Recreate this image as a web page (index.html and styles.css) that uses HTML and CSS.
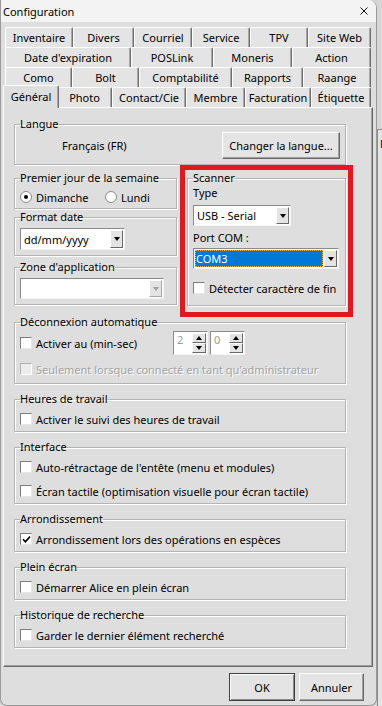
FILE: index.html
```html
<!DOCTYPE html>
<html lang="fr">
<head>
  <meta charset="UTF-8">
  <title>Configuration</title>
  <link rel="stylesheet" href="styles.css">
</head>
<body>
  <div class="screen">
    <div class="window">
      <div class="titlebar">
        <span class="title">Configuration</span>
        <svg class="close" width="8" height="8" viewBox="0 0 8 8"><path d="M0.5 0.5L7.5 7.5M7.5 0.5L0.5 7.5" stroke="#111" stroke-width="1"/></svg>
      </div>

      <div class="tabs">
        <div class="tabrow row1">
          <span class="tab">Inventaire</span>
          <span class="tab">Divers</span>
          <span class="tab">Courriel</span>
          <span class="tab">Service</span>
          <span class="tab">TPV</span>
          <span class="tab">Site Web</span>
        </div>
        <div class="tabrow row2">
          <span class="tab">Date d'expiration</span>
          <span class="tab">POSLink</span>
          <span class="tab">Moneris</span>
          <span class="tab">Action</span>
        </div>
        <div class="tabrow row3">
          <span class="tab">Como</span>
          <span class="tab">Bolt</span>
          <span class="tab">Comptabilité</span>
          <span class="tab">Rapports</span>
          <span class="tab">Raange</span>
        </div>
        <div class="tabrow row4">
          <span class="tab active">Général</span>
          <span class="tab">Photo</span>
          <span class="tab">Contact/Cie</span>
          <span class="tab">Membre</span>
          <span class="tab">Facturation</span>
          <span class="tab">Étiquette</span>
        </div>
      </div>

      <div class="panel">
        <fieldset class="grp langue">
          <legend>Langue</legend>
          <div class="langue-row">
            <span class="lang-name">Français (FR)</span>
            <button class="btn btn-lang">Changer la langue...</button>
          </div>
        </fieldset>

        <div class="mid">
          <div class="leftcol">
            <fieldset class="grp">
              <legend>Premier jour de la semaine</legend>
              <div class="radios">
                <span class="opt"><span class="radio on"></span>Dimanche</span>
                <span class="opt"><span class="radio"></span>Lundi</span>
              </div>
            </fieldset>
            <fieldset class="grp combo-grp">
              <legend>Format date</legend>
              <div class="combo combo-date">
                <span class="combo-val">dd/mm/yyyy</span>
                <span class="drop"><span class="tri"></span></span>
              </div>
            </fieldset>
            <fieldset class="grp combo-grp zone">
              <legend>Zone d'application</legend>
              <div class="combo combo-zone">
                <span class="combo-val"></span>
                <span class="drop off"><span class="tri"></span></span>
              </div>
            </fieldset>
          </div>

          <div class="highlight">
            <fieldset class="grp scanner">
              <legend>Scanner</legend>
              <div class="field-label">Type</div>
              <div class="combo combo-type">
                <span class="combo-val">USB - Serial</span>
                <span class="drop"><span class="tri"></span></span>
              </div>
              <div class="field-label port">Port COM :</div>
              <div class="combo combo-port">
                <span class="combo-val"><span class="picked">COM3</span></span>
                <span class="drop"><span class="tri"></span></span>
              </div>
              <div class="chk scan-chk"><span class="box"></span>Détecter caractère de fin</div>
            </fieldset>
          </div>
        </div>

        <fieldset class="grp deco">
          <legend>Déconnexion automatique</legend>
          <div class="deco-row">
            <div class="chk"><span class="box"></span>Activer au (min-sec)</div>
            <div class="spinners">
              <div class="spin">
                <span class="spin-val">2</span>
                <span class="spin-btns"><span class="sb"><span class="up"></span></span><span class="sb"><span class="down"></span></span></span>
              </div>
              <div class="spin">
                <span class="spin-val">0</span>
                <span class="spin-btns"><span class="sb"><span class="up"></span></span><span class="sb"><span class="down"></span></span></span>
              </div>
            </div>
          </div>
          <div class="chk disabled"><span class="box"></span>Seulement lorsque connecté en tant qu'administrateur</div>
        </fieldset>

        <fieldset class="grp">
          <legend>Heures de travail</legend>
          <div class="chk"><span class="box"></span>Activer le suivi des heures de travail</div>
        </fieldset>

        <fieldset class="grp">
          <legend>Interface</legend>
          <div class="chk"><span class="box"></span>Auto-rétractage de l'entête (menu et modules)</div>
          <div class="chk"><span class="box"></span>Écran tactile (optimisation visuelle pour écran tactile)</div>
        </fieldset>

        <fieldset class="grp">
          <legend>Arrondissement</legend>
          <div class="chk"><span class="box checked"><svg width="9" height="9" viewBox="0 0 9 9"><path d="M1 4.2L3.4 6.8L8 1.6" fill="none" stroke="#000" stroke-width="1.6"/></svg></span>Arrondissement lors des opérations en espèces</div>
        </fieldset>

        <fieldset class="grp">
          <legend>Plein écran</legend>
          <div class="chk"><span class="box"></span>Démarrer Alice en plein écran</div>
        </fieldset>

        <fieldset class="grp">
          <legend>Historique de recherche</legend>
          <div class="chk"><span class="box"></span>Garder le dernier élément recherché</div>
        </fieldset>
      </div>

      <div class="footer">
        <button class="btn btn-ok">OK</button>
        <button class="btn btn-cancel">Annuler</button>
      </div>
    </div>
    <div class="behind">
      <div class="behind-top"></div>
      <div class="behind-body">F</div>
    </div>
  </div>
</body>
</html>
```

FILE: styles.css
```css
* {
  margin: 0;
  padding: 0;
  box-sizing: border-box;
}
body {
  width: 382px;
  height: 706px;
  overflow: hidden;
  background: #d6d6d6;
  font-family: "Noto Sans", "Open Sans", sans-serif;
  font-size: 11px;
  color: #000;
}
.screen {
  display: flex;
  height: 706px;
}
.window {
  flex: none;
  width: 377px;
  height: 706px;
  display: flex;
  flex-direction: column;
  background: #dedede;
  border: 1px solid #9a9a9a;
  border-top: 0;
  border-radius: 0 8px 7px 7px;
  overflow: hidden;
}

/* title */
.titlebar {
  height: 22px;
  display: flex;
  align-items: center;
  justify-content: space-between;
  padding: 0 8px 0 2px;
  background: #f3f3f3;
}
.title {
  font-size: 11px;
}

/* tabs */
.tabs {
  padding: 5px 0 0 4px;
}
.tabrow {
  display: grid;
  width: 366px;
  height: 20px;
}
.row1 { grid-template-columns: 68px 61px 58px 58px 58px 63px; }
.row2 { grid-template-columns: 126px 82px 79px 79px; }
.row3 { grid-template-columns: 67px 67px 93px 71px 68px; }
.row4 { grid-template-columns: 52px 55px 74px 59px 66px 60px; }
.tab {
  display: flex;
  align-items: center;
  justify-content: center;
  background: #e4e4e4;
  border-top: 1px solid #fff;
  border-left: 1px solid #fff;
  border-right: 1px solid #6f6f6f;
  box-shadow: inset -1px 0 #a8a8a8;
  border-radius: 2px 2px 0 0;
  white-space: nowrap;
}
.tab.active {
  position: relative;
  z-index: 2;
  margin: -2px -2px -1px;
  background: #dedede;
  padding-bottom: 2px;
}

/* panel */
.panel {
  height: 560px;
  margin: 0 3px 0 2px;
  padding: 8px 26px 0 10px;
  border: 1px solid;
  border-color: #fff #696969 #696969 #fff;
  box-shadow: inset -1px -1px #a0a0a0;
  display: flex;
  flex-direction: column;
  gap: 7px;
}
.grp {
  min-width: 0;
  padding: 0 5px;
  border: 1px solid #b4b4b4;
  box-shadow: inset 1px 1px #fff, 1px 1px #fff;
}
.grp legend {
  padding: 0;
  line-height: 16px;
}
.panel > .langue {
  padding-bottom: 5px;
}
.langue-row {
  display: flex;
  align-items: center;
  height: 27px;
}
.lang-name {
  margin-left: 42px;
}
.btn {
  font: inherit;
  color: #000;
  background: #e4e4e4;
  border: 1px solid;
  border-color: #fff #696969 #696969 #fff;
  box-shadow: inset -1px -1px #a0a0a0;
}
.btn-lang {
  margin-left: auto;
  width: 118px;
  height: 27px;
}

/* middle block */
.mid {
  display: flex;
  align-items: flex-start;
  margin-top: -7px;
}
.leftcol {
  width: 164px;
  padding-top: 5px;
  display: flex;
  flex-direction: column;
}
.leftcol .grp {
  margin-right: 1px;
}
.radios {
  display: grid;
  grid-template-columns: 85px auto;
  height: 22px;
  align-items: center;
}
.opt {
  display: flex;
  align-items: center;
}
.radio {
  width: 12px;
  height: 12px;
  margin-right: 4px;
  border-radius: 50%;
  background: #fff;
  border: 1px solid #8a8a8a;
  display: flex;
  align-items: center;
  justify-content: center;
}
.radio.on::after {
  content: "";
  width: 4px;
  height: 4px;
  border-radius: 50%;
  background: #000;
}
.combo-grp {
  padding-bottom: 5px;
}
.zone {
  margin-top: 3px;
}
.combo {
  display: flex;
  align-items: center;
  height: 22px;
  margin-top: 3px;
  padding: 1px;
  background: #fff;
  border: 1px solid;
  border-color: #8a8a8a #f4f4f4 #f4f4f4 #8a8a8a;
}
.combo-val {
  flex: 1;
  padding-left: 2px;
  white-space: nowrap;
}
.drop {
  width: 13px;
  height: 100%;
  display: flex;
  align-items: center;
  justify-content: center;
  background: #e4e4e4;
  border: 1px solid;
  border-color: #fff #696969 #696969 #fff;
}
.tri {
  width: 0;
  height: 0;
  border-left: 3.5px solid transparent;
  border-right: 3.5px solid transparent;
  border-top: 4px solid #000;
}
.drop.off .tri {
  border-top-color: #a0a0a0;
}
.drop.off {
  border-color: #fff #a8a8a8 #a8a8a8 #fff;
}
.combo-date {
  width: 105px;
}
.combo-zone {
  width: 144px;
  height: 21px;
}

/* highlighted scanner */
.highlight {
  width: 173px;
  margin-left: 2px;
  margin-right: -7px;
  margin-bottom: -10px;
  border: 5px solid #e3171d;
  padding: 0 2px 6px;
}
.scanner {
  padding-bottom: 5px;
}
.field-label {
  line-height: 14px;
}
.field-label.port {
  margin-top: 4px;
  line-height: 16px;
}
.combo-type {
  width: 98px;
  height: 21px;
  margin-top: 5px;
}
.combo-port {
  width: 146px;
  height: 21px;
  margin-top: 2px;
}
.combo-port .combo-val {
  padding-left: 0;
  height: 100%;
  display: flex;
}
.picked {
  flex: 1;
  display: flex;
  align-items: center;
  padding-left: 1px;
  color: #fff;
  background: #0078d7;
  outline: 1px dotted #f0b040;
  outline-offset: -1px;
  margin-right: 1px;
}
.scan-chk {
  margin-top: 7px;
  height: 22px;
}

/* checkboxes */
.chk {
  display: flex;
  align-items: center;
  height: 24px;
  white-space: nowrap;
}
.box {
  flex: none;
  width: 12px;
  height: 12px;
  margin-right: 4px;
  background: #fff;
  border: 1px solid;
  border-color: #7c7c7c #e6e6e6 #e6e6e6 #7c7c7c;
  display: flex;
  align-items: center;
  justify-content: center;
}
.chk.disabled {
  color: #a3a3a3;
  text-shadow: 1px 1px #fff;
  height: 26px;
}
.chk.disabled .box {
  background: #ececec;
  border-color: #b0b0b0 #fff #fff #b0b0b0;
}

/* déconnexion */
.deco {
  padding-bottom: 1px;
}
.deco-row {
  display: grid;
  grid-template-columns: 153px auto;
  align-items: center;
  height: 26px;
}
.spinners {
  display: flex;
  gap: 2px;
}
.spin {
  display: flex;
  width: 35px;
  height: 24px;
  padding: 1px;
  background: #fff;
  border: 1px solid;
  border-color: #8a8a8a #f4f4f4 #f4f4f4 #8a8a8a;
}
.spin-val {
  flex: 1;
  color: #9a9a9a;
  padding-left: 2px;
  line-height: 14px;
}
.spin-btns {
  width: 14px;
  display: flex;
  flex-direction: column;
}
.sb {
  flex: 1;
  display: flex;
  align-items: center;
  justify-content: center;
  background: #e4e4e4;
  border: 1px solid;
  border-color: #fff #696969 #696969 #fff;
}
.up, .down {
  width: 0;
  height: 0;
  border-left: 3.5px solid transparent;
  border-right: 3.5px solid transparent;
}
.up { border-bottom: 4px solid #000; }
.down { border-top: 4px solid #000; }

/* footer */
.footer {
  display: flex;
  justify-content: flex-end;
  gap: 4px;
  padding: 6px 12px 0 0;
}
.footer .btn {
  height: 28px;
}
.btn-ok {
  width: 66px;
  border-color: #3f3f3f;
  box-shadow: inset 1px 1px #fff, inset -1px -1px #8a8a8a;
}
.btn-cancel {
  width: 65px;
}

/* window behind */
.behind {
  flex: 1;
  display: flex;
  flex-direction: column;
}
.behind-top {
  height: 130px;
  background: #d6d6d6;
  border-bottom: 1px solid #8a8a8a;
}
.behind-body {
  flex: 1;
  padding: 6px 0 0 2px;
  background: #e4e4e4;
  border-left: 1px solid #8a8a8a;
}
```
